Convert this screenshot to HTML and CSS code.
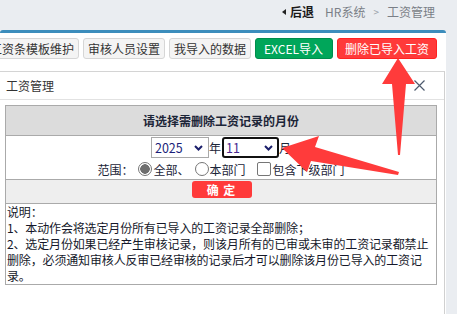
FILE: index.html
```html
<!DOCTYPE html>
<html lang="zh-CN">
<head>
<meta charset="utf-8">
<title>工资管理</title>
<link rel="stylesheet" href="styles.css">
</head>
<body>
<div class="topbar">
  <span class="back"><span class="tri"></span>后退</span>
  <span class="crumb">HR系统</span>
  <span class="sep">&gt;</span>
  <span class="crumb">工资管理</span>
</div>
<div class="panel">
  <div class="toolbar">
    <span class="btn">工资条模板维护</span>
    <span class="btn">审核人员设置</span>
    <span class="btn">我导入的数据</span>
    <span class="btn btn-green">EXCEL导入</span>
    <span class="btn btn-red">删除已导入工资</span>
  </div>
</div>

<div class="dialog">
  <div class="dlg-title">
    <span>工资管理</span>
    <svg class="close" width="11" height="11" viewBox="0 0 11 11"><path d="M0.5 0.5L10.5 10.5M10.5 0.5L0.5 10.5" stroke="#4d5a6e" stroke-width="1.2" fill="none"/></svg>
  </div>
  <div class="dlg-body">
    <div class="grid">
      <div class="row row-head">请选择需删除工资记录的月份</div>
      <div class="row row-form">
        <div class="line">
          <span class="sel"><span class="val">2025</span><svg class="chev" width="9" height="6" viewBox="0 0 9 6"><path d="M1 1L4.5 4.5L8 1" stroke="#1b1f6b" stroke-width="2" fill="none"/></svg></span>
          <span>年</span>
          <span class="sel sel-focus"><span class="val val2">11</span><svg class="chev" width="9" height="6" viewBox="0 0 9 6"><path d="M1 1L4.5 4.5L8 1" stroke="#1b1f6b" stroke-width="2" fill="none"/></svg></span>
          <span>月</span>
        </div>
        <div class="line line2">
          <span class="lbl">范围：</span>
          <span class="radio checked"></span><span>全部、</span>
          <span class="radio"></span><span>本部门</span>
          <span class="check"></span><span>包含下级部门</span>
        </div>
      </div>
      <div class="row row-btn"><span class="btn-ok">确 定</span></div>
      <div class="row row-note">说明：<br>1、本动作会将选定月份所有已导入的工资记录全部删除；<br>2、选定月份如果已经产生审核记录，则该月所有的已审或未审的工资记录都禁止删除，必须通知审核人反审已经审核的记录后才可以删除该月份已导入的工资记录。</div>
    </div>
  </div>
</div>

<svg class="arrows" width="457" height="314" viewBox="0 0 457 314">
  <polygon fill="#ff3b3b" points="398,58 382,84 392,84 398,155 400,155 406,84 415,84"/>
  <polygon fill="#ff3b3b" points="282,148 319,136 315,147 399,172 398,175 311,161 307,172"/>
</svg>
</body>
</html>
```

FILE: styles.css
```css
html, body {
  margin: 0;
  padding: 0;
}
body {
  width: 457px;
  height: 314px;
  overflow: hidden;
  position: relative;
  background: #eaedf1;
  font-family: "Noto Sans CJK SC", "Microsoft YaHei", sans-serif;
  font-size: 12px;
  color: #222;
}

.topbar {
  height: 30px;
  box-sizing: border-box;
  padding: 3px 22px 0 0;
  display: flex;
  justify-content: flex-end;
  align-items: flex-start;
  line-height: 17px;
  font-size: 12px;
}
.back {
  font-weight: bold;
  color: #1a1a1a;
  display: flex;
  align-items: center;
  margin-right: 11px;
}
.tri {
  width: 0;
  height: 0;
  border-top: 3px solid transparent;
  border-bottom: 3px solid transparent;
  border-right: 4px solid #222;
  margin-right: 4px;
}
.crumb {
  color: #7a7f87;
}
.sep {
  color: #9aa0a8;
  margin: 0 8px;
  font-size: 10px;
}

.panel {
  width: 446px;
  height: 284px;
  box-sizing: border-box;
  background: #fff;
  border-top: 3px solid #3c8dbc;
  border-radius: 3px 3px 0 0;
}
.toolbar {
  display: flex;
  justify-content: flex-end;
  gap: 4px;
  padding: 5px 9px 0 0;
  overflow: hidden;
}
.btn {
  flex: none;
  height: 21px;
  box-sizing: border-box;
  line-height: 19px;
  padding: 0 4px;
  border: 1px solid #d6d6d6;
  border-radius: 3px;
  background: #f4f4f4;
  color: #333;
  white-space: nowrap;
}
.btn-green {
  background: #00a65a;
  border-color: #008d4c;
  color: #fff;
  padding: 0 9px 0 8px;
}
.btn-red {
  background: #ff3a3a;
  border-color: #f22;
  color: #fff;
  padding: 0 7px;
}

.dialog {
  position: absolute;
  left: 0;
  top: 71px;
  width: 445px;
  height: 243px;
  box-sizing: border-box;
  background: #fff;
  border-top: 1px solid #d4d4d4;
  border-right: 1px solid #d0d0d0;
}
.dlg-title {
  height: 28px;
  box-sizing: border-box;
  border-bottom: 1px solid #e2e2e2;
  padding: 0 19px 0 6px;
  display: flex;
  justify-content: space-between;
  align-items: center;
  color: #333;
}
.dlg-body {
  padding: 5px 7px 0 5px;
}
.grid {
  border: 1px solid #aaa;
}
.row {
  border-bottom: 1px solid #aaa;
}
.row:last-child {
  border-bottom: none;
}
.row-head {
  height: 29px;
  background: #dcdcdc;
  font-weight: bold;
  text-align: center;
  line-height: 29px;
  color: #1c2538;
}
.row-form {
  height: 44px;
  box-sizing: border-box;
  padding-top: 1px;
  display: flex;
  flex-direction: column;
  align-items: center;
  color: #1c2538;
}
.line {
  display: flex;
  align-items: center;
  height: 21px;
}
.line2 {
  height: 20px;
  margin-top: 1px;
}
.sel {
  width: 58px;
  height: 21px;
  box-sizing: border-box;
  border: 1px solid #a9a9a9;
  display: flex;
  align-items: center;
  justify-content: space-between;
  padding: 0 5px 0 3px;
}
.sel-focus {
  width: 57px;
  border: 2px solid #111;
  border-radius: 3px;
  padding: 0 4px 0 2px;
  margin-left: 1px;
}
.val {
  color: #1b1f7a;
  font-size: 12.5px;
}
.val2 {
  color: #4a2a90;
}
.chev {
  display: block;
}
.radio {
  width: 14px;
  height: 14px;
  box-sizing: border-box;
  border: 1px solid #767676;
  border-radius: 50%;
  margin-right: 1px;
  margin-left: 5px;
  background: #fff;
}
.radio.checked {
  background: radial-gradient(circle, #6f6f6f 0 4.5px, #fff 5px);
}
.check {
  width: 14px;
  height: 14px;
  box-sizing: border-box;
  border: 1px solid #767676;
  border-radius: 2px;
  margin: 0 2px 0 11px;
}
.row-btn {
  height: 23px;
  background: #eee;
  display: flex;
  justify-content: center;
  align-items: flex-start;
  padding-left: 1px;
}
.btn-ok {
  margin-top: 1px;
  width: 60px;
  height: 17px;
  line-height: 17px;
  border-radius: 3px;
  background: #ff3a3a;
  color: #fff;
  text-align: center;
  font-weight: bold;
  letter-spacing: 1px;
}
.row-note {
  height: 80px;
  line-height: 16px;
  padding-left: 1px;
  font-size: 12px;
  letter-spacing: -0.15px;
  color: #15182a;
}

.arrows {
  position: absolute;
  left: 0;
  top: 0;
  pointer-events: none;
}
```
